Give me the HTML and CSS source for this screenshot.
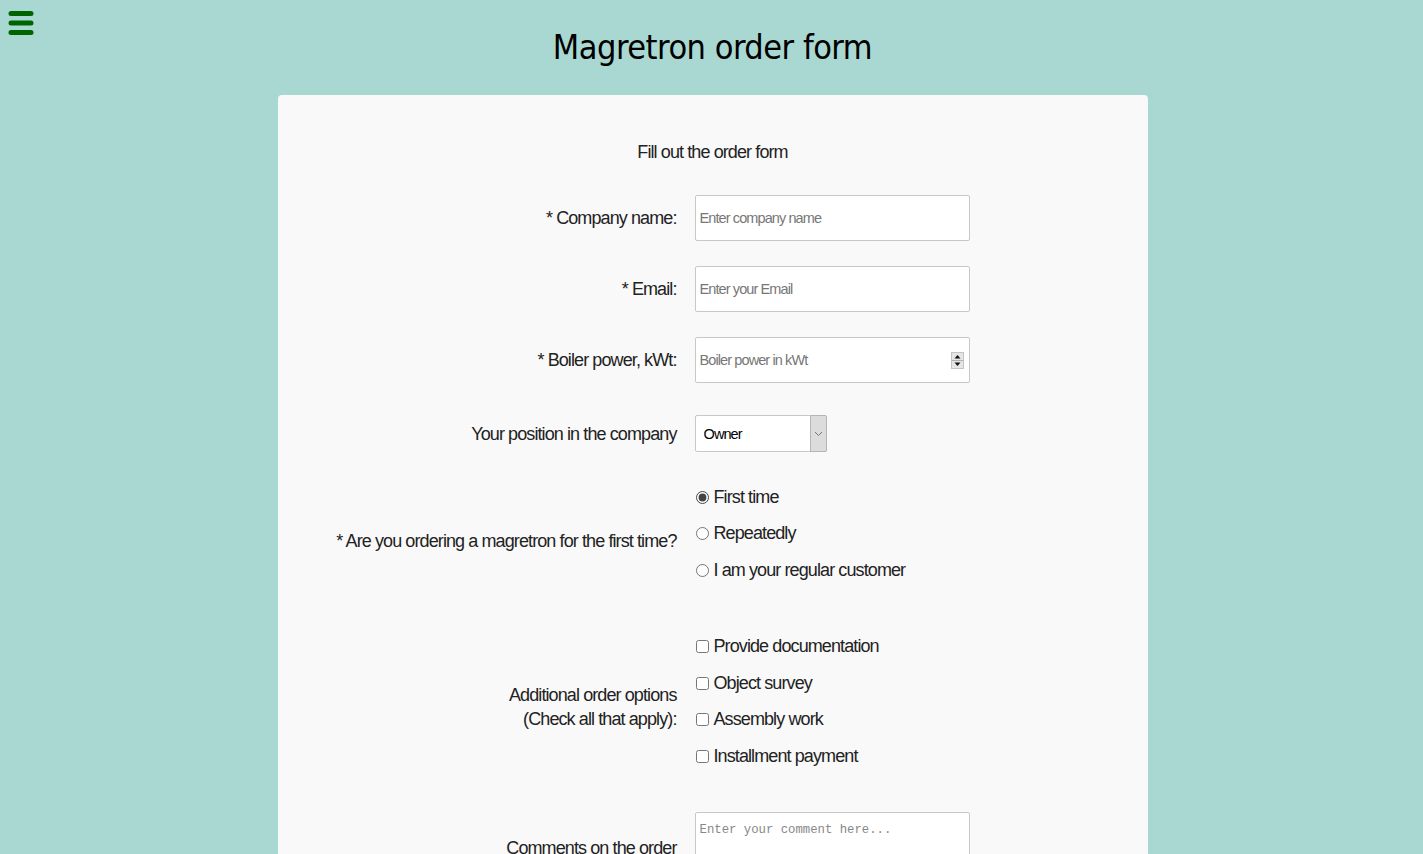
FILE: index.html
```html
<!DOCTYPE html>
<html lang="en">
<head>
<meta charset="utf-8">
<title>Magretron order form</title>
<link rel="stylesheet" href="styles.css">
</head>
<body>
<button class="menu-btn" aria-label="Menu">
  <svg width="26" height="26" viewBox="0 0 26 26"><g stroke="#006400" stroke-width="5" stroke-linecap="round"><line x1="3" y1="3.5" x2="23" y2="3.5"/><line x1="3" y1="13" x2="23" y2="13"/><line x1="3" y1="22.5" x2="23" y2="22.5"/></g></svg>
</button>
<header class="header"><h1 class="title">Magretron order form</h1></header>
<main class="card">
  <p class="subtitle">Fill out the order form</p>
  <form class="form">
    <div class="row">
      <label class="label">* Company name:</label>
      <div class="field"><input class="text-input" type="text" placeholder="Enter company name"></div>
    </div>
    <div class="row">
      <label class="label">* Email:</label>
      <div class="field"><input class="text-input" type="email" placeholder="Enter your Email"></div>
    </div>
    <div class="row">
      <label class="label">* Boiler power, kWt:</label>
      <div class="field number-wrap">
        <input class="text-input" type="number" placeholder="Boiler power in kWt">
        <span class="spinner" aria-hidden="true">
          <svg width="13" height="17" viewBox="0 0 13 17">
            <rect x="0.5" y="0.5" width="12" height="16" fill="#e6e6e6" stroke="#c4c4c4"/>
            <line x1="1" y1="8.5" x2="12" y2="8.5" stroke="#b0b0b0"/>
            <path d="M3.5 6.5 L6.5 3 L9.5 6.5 Z" fill="#111"/>
            <path d="M3.5 10.5 L6.5 14 L9.5 10.5 Z" fill="#111"/>
          </svg>
        </span>
      </div>
    </div>
    <div class="row row-select">
      <label class="label">Your position in the company</label>
      <div class="field">
        <div class="select-wrap">
          <select class="select"><option>Owner</option></select>
          <span class="select-arrow"><svg width="9" height="6" viewBox="0 0 9 6"><path d="M1 1 L4.5 4.5 L8 1" fill="none" stroke="#777" stroke-width="1"/></svg></span>
        </div>
      </div>
    </div>
    <div class="row row-radios">
      <label class="label">* Are you ordering a magretron for the first time?</label>
      <div class="field options radios">
        <label class="option"><input type="radio" name="first" checked> First time</label>
        <label class="option"><input type="radio" name="first"> Repeatedly</label>
        <label class="option"><input type="radio" name="first"> I am your regular customer</label>
      </div>
    </div>
    <div class="row row-checks">
      <label class="label">Additional order options<br>(Check all that apply):</label>
      <div class="field options checks">
        <label class="option"><input type="checkbox"> Provide documentation</label>
        <label class="option"><input type="checkbox"> Object survey</label>
        <label class="option"><input type="checkbox"> Assembly work</label>
        <label class="option"><input type="checkbox"> Installment payment</label>
      </div>
    </div>
    <div class="row row-comment">
      <label class="label">Comments on the order</label>
      <div class="field"><textarea class="textarea" placeholder="Enter your comment here..."></textarea></div>
    </div>
  </form>
</main>
</body>
</html>
```
FILE: styles.css
```css
* { box-sizing: border-box; }
html, body { margin: 0; padding: 0; }
body {
  background: #a9d8d3;
  font-family: "Liberation Sans", Arial, sans-serif;
  color: #1e1e1e;
  min-height: 854px;
  padding-left: 2px;
}
.menu-btn {
  position: absolute;
  left: 6px;
  top: 8px;
  width: 30px;
  height: 30px;
  padding: 0 2px;
  border: 0;
  background: transparent;
  display: flex;
  align-items: center;
}
.header {
  height: 95px;
  display: flex;
  justify-content: center;
  align-items: center;
}
.title {
  margin: 0 0 2px;
  font-family: "DejaVu Sans Condensed", "DejaVu Sans", sans-serif;
  font-weight: normal;
  font-size: 34px;
  letter-spacing: -0.5px;
  color: #000;
}
.card {
  width: 870px;
  margin: 0 auto;
  background: #f9f9f9;
  border-radius: 4px;
  padding: 45px 0 40px;
  min-height: 800px;
}
.subtitle {
  margin: 0 0 31px;
  text-align: center;
  font-size: 18px;
  letter-spacing: -0.9px;
  line-height: 24px;
  color: #222;
}
.form { display: flex; flex-direction: column; }
.row {
  display: flex;
  align-items: center;
  margin-bottom: 25px;
}
.label {
  flex: 0 0 417px;
  padding-right: 18px;
  text-align: right;
  font-size: 18px;
  letter-spacing: -0.9px;
  line-height: 24px;
  color: #222;
}
.field { flex: 0 0 auto; }
.text-input {
  width: 275px;
  height: 46px;
  border: 1px solid #c8c8c8;
  border-radius: 2px;
  background: #fff;
  padding: 0 4px;
  font-family: "Liberation Sans", Arial, sans-serif;
  font-size: 14.5px;
  letter-spacing: -0.9px;
  color: #333;
  outline: none;
  display: block;
}
.text-input::placeholder { color: #777; }
.text-input::-webkit-inner-spin-button,
.text-input::-webkit-outer-spin-button { -webkit-appearance: none; margin: 0; }
.number-wrap { position: relative; }
.spinner {
  position: absolute;
  right: 6px;
  top: 15px;
  width: 13px;
  height: 17px;
  display: block;
  pointer-events: none;
}
.spinner svg { display: block; }
.row-select { margin-top: 7px; margin-bottom: 27px; }
.select-wrap { position: relative; width: 132px; height: 37px; }
.select {
  -webkit-appearance: none;
  appearance: none;
  width: 132px;
  height: 37px;
  border: 1px solid #c8c8c8;
  border-radius: 2px;
  background: #fff;
  padding: 0 8px;
  font-family: "Liberation Sans", Arial, sans-serif;
  font-size: 14.5px;
  letter-spacing: -0.9px;
  color: #000;
  outline: none;
}
.select-arrow {
  position: absolute;
  right: 0;
  top: 0;
  width: 17px;
  height: 37px;
  background: #dcdcdc;
  border: 1px solid #b5b5b5;
  border-radius: 0 2px 2px 0;
  display: flex;
  align-items: center;
  justify-content: center;
  pointer-events: none;
}
.options { display: flex; flex-direction: column; }
.option {
  display: flex;
  align-items: center;
  height: 36.5px;
  font-size: 18px;
  letter-spacing: -0.9px;
  color: #222;
}
.option input { margin: 0 5px 0 1px; width: 13px; height: 13px; accent-color: #444; }
.radios { padding-bottom: 14px; }
.row-radios { margin-bottom: 26px; }
.checks { padding-bottom: 11px; }
.row-checks { margin-bottom: 26px; }
.textarea {
  width: 275px;
  height: 72px;
  border: 1px solid #c8c8c8;
  border-radius: 2px;
  background: #fff;
  padding: 10px 4px 8px;
  font-family: "Liberation Mono", "Courier New", monospace;
  font-size: 12.3px;
  resize: none;
  outline: none;
  display: block;
}
.textarea::placeholder { color: #888; }
```
